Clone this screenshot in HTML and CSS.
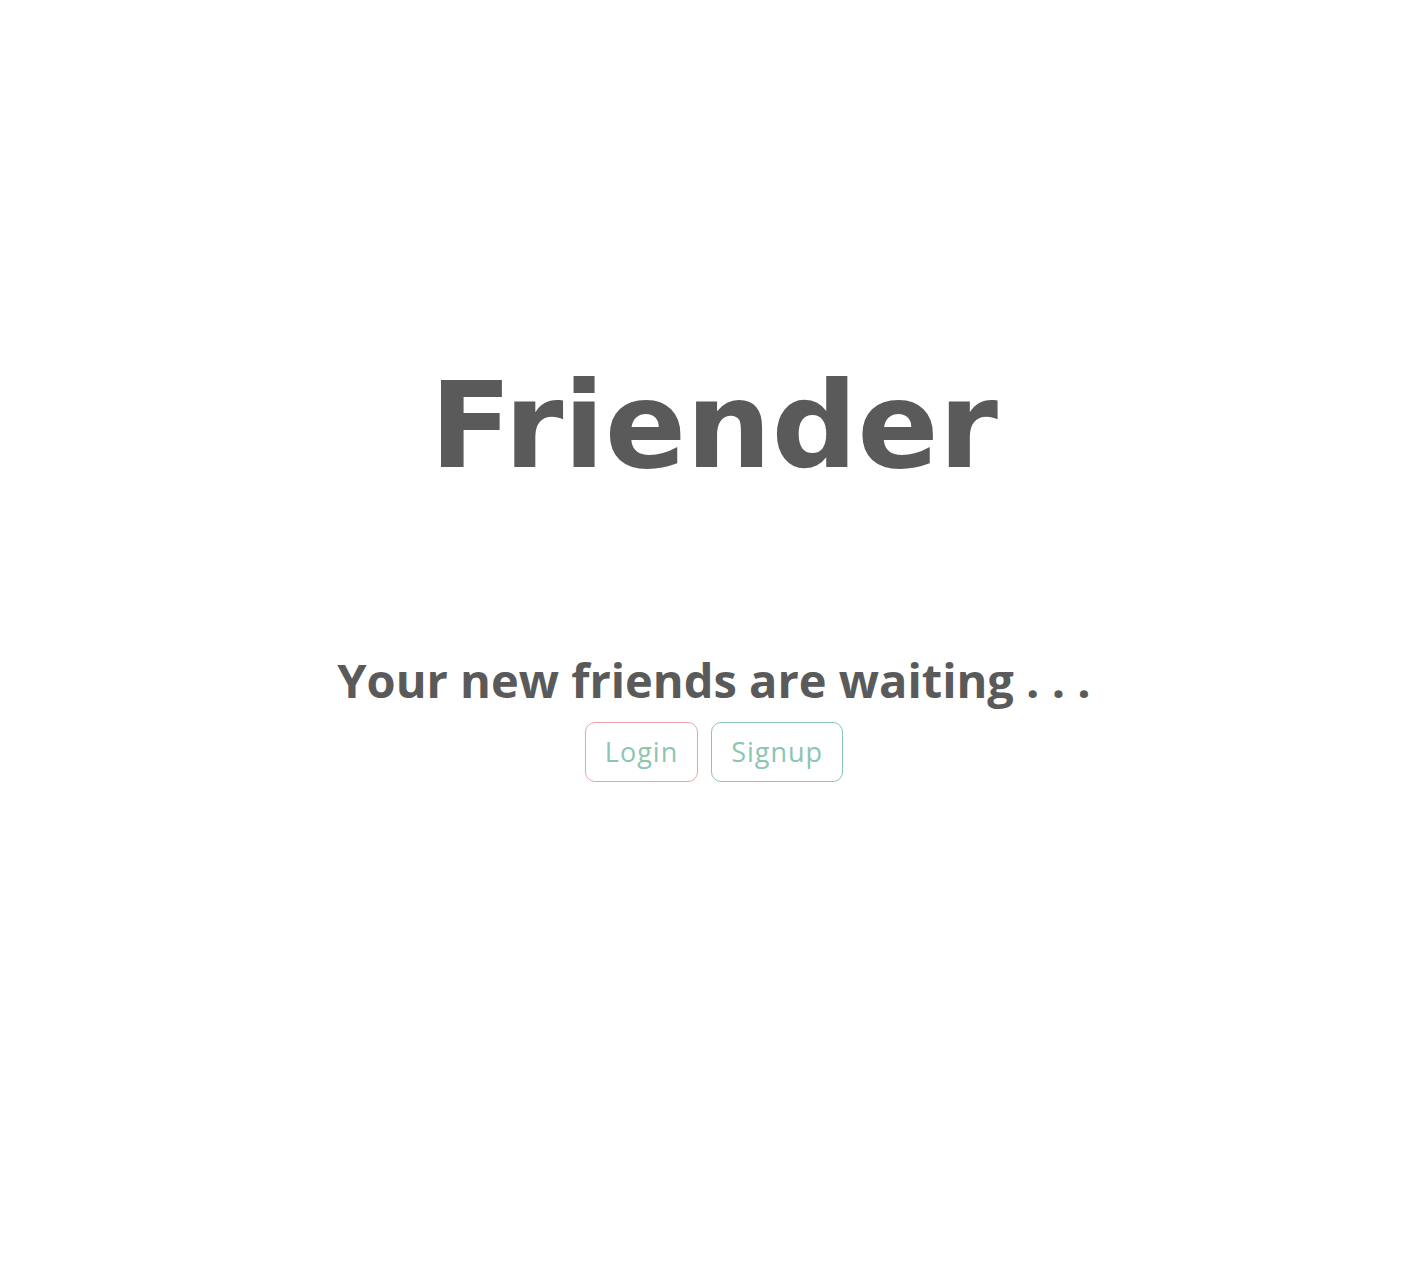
FILE: index.html
```html
<!DOCTYPE html>
<html lang="en">
<head>
<meta charset="utf-8">
<title>Friender</title>
<link rel="stylesheet" href="styles.css">
</head>
<body>
<main class="landing">
  <h1 class="brand">Friender</h1>
  <h2 class="tagline">Your new friends are waiting . . .</h2>
  <div class="actions">
    <a class="btn btn-login" href="#">Login</a>
    <a class="btn btn-signup" href="#">Signup</a>
  </div>
</main>
</body>
</html>
```
FILE: styles.css
```css
html, body {
  margin: 0;
  padding: 0;
  background: #ffffff;
}
body {
  font-family: "Open Sans", "DejaVu Sans", sans-serif;
  color: #5a5a5a;
}
.landing {
  display: flex;
  flex-direction: column;
  align-items: center;
  padding-top: 362px;
  padding-left: 24px;
}
.brand {
  margin: 0;
  font-family: "DejaVu Sans", "Open Sans", sans-serif;
  font-size: 120px;
  line-height: 128px;
  font-weight: 700;
}
.tagline {
  margin: 162px 0 0;
  font-size: 47px;
  line-height: 56px;
  font-weight: 700;
}
.actions {
  display: flex;
  gap: 13px;
  margin-top: 14px;
}
.btn {
  display: block;
  padding: 12px 19px;
  font-size: 27px;
  line-height: 34px;
  font-weight: 400;
  color: #8cc5b0;
  text-decoration: none;
  border: 1px solid #8cc5b0;
  border-radius: 10px;
  letter-spacing: 1px;
}
.btn-login {
  border-color: #eba3a6;
}
```
